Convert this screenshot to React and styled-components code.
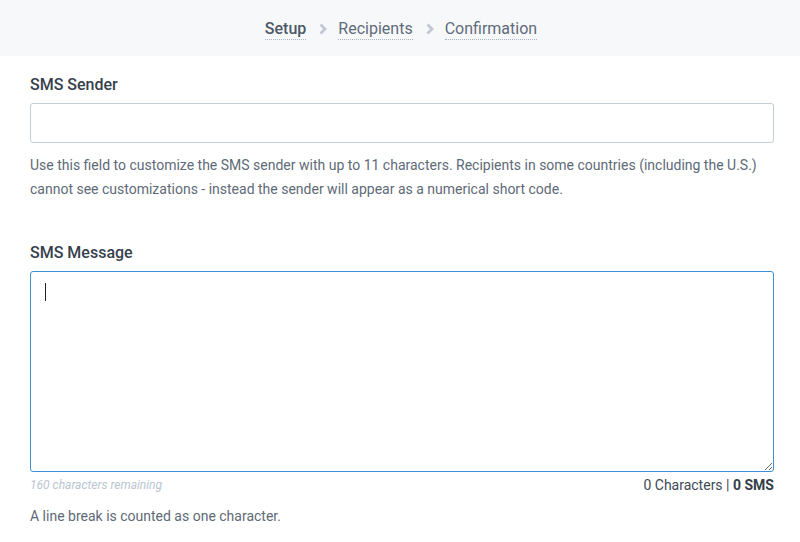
import styled, { createGlobalStyle } from "styled-components";
import { useState } from "react";

const GlobalStyle = createGlobalStyle`
  html, body {
    margin: 0;
    padding: 0;
    background: #ffffff;
    font-family: Roboto, "Liberation Sans", Arial, sans-serif;
  }
  * {
    box-sizing: border-box;
  }
`;

const Steps = styled.nav`
  height: 56px;
  background: #f7f8fa;
  display: flex;
  align-items: center;
  justify-content: center;
  padding-left: 2px;
`;
const Step = styled.span`
  font-size: 16px;
  color: ${(p) => (p.active ? "#4d5866" : "#5f6b7a")};
  font-weight: ${(p) => (p.active ? 500 : 400)};
  border-bottom: 1px dotted #aab4c0;
  line-height: 19px;
  padding-bottom: 1px;
  margin-top: 2px;
`;
const Chevron = styled.svg`
  width: 10px;
  height: 12px;
  margin: 2px 10px 0 12px;
`;

const Content = styled.main`
  padding: 17px 26px 0 30px;
`;
const Field = styled.section`
  display: flex;
  flex-direction: column;
  margin-bottom: ${(p) => p.gap || 0}px;
`;
const Label = styled.label`
  font-size: 16px;
  line-height: 24px;
  font-weight: 500;
  color: #36404c;
  margin-bottom: 6px;
`;
const Input = styled.input`
  height: 40px;
  border: 1px solid #c3cdd8;
  border-radius: 3px;
  padding: 0 12px;
  font: inherit;
  font-size: 16px;
  outline: none;
`;
const Help = styled.p`
  margin: ${(p) => p.top || 10}px 0 0;
  font-size: 14px;
  line-height: 24px;
  color: #5e6a77;
`;
const BoxWrap = styled.div`
  position: relative;
  display: flex;
  flex-direction: column;
`;
const MessageBox = styled.textarea`
  height: 201px;
  border: 1px solid #3f8fd2;
  border-radius: 3px;
  padding: 10px 15px;
  font-family: Roboto, "Liberation Sans", Arial, sans-serif;
  font-size: 16px;
  line-height: 24px;
  color: #333;
  caret-color: #333;
  outline: none;
  resize: vertical;
`;
const Caret = styled.span`
  position: absolute;
  left: 15px;
  top: 12px;
  width: 1px;
  height: 18px;
  background: #222;
  pointer-events: none;
`;
const Counter = styled.div`
  display: flex;
  justify-content: space-between;
  align-items: center;
  margin-top: 4px;
  height: 18px;
`;
const Remaining = styled.span`
  font-size: 12px;
  font-style: italic;
  color: #b9c5d1;
`;
const Count = styled.span`
  font-size: 14px;
  color: #404a56;
  b {
    font-weight: 700;
    color: #333d48;
  }
`;

const ChevronIcon = () => (
  <Chevron viewBox="0 0 10 12">
    <path d="M2.5 1.5 L7 6 L2.5 10.5" fill="none" stroke="#bfc8d3" strokeWidth="2.8" />
  </Chevron>
);

const App = () => {
  const [sender, setSender] = useState("");
  const [message, setMessage] = useState("");

  return (
    <>
      <GlobalStyle />
      <Steps>
        <Step active>Setup</Step>
        <ChevronIcon />
        <Step>Recipients</Step>
        <ChevronIcon />
        <Step>Confirmation</Step>
      </Steps>
      <Content>
        <Field gap={40}>
          <Label>SMS Sender</Label>
          <Input value={sender} onChange={(e) => setSender(e.target.value)} />
          <Help>
            Use this field to customize the SMS sender with up to 11 characters. Recipients in some countries
            (including the U.S.) cannot see customizations - instead the sender will appear as a numerical short
            code.
          </Help>
        </Field>
        <Field>
          <Label>SMS Message</Label>
          <BoxWrap>
            <MessageBox value={message} onChange={(e) => setMessage(e.target.value)} />
            {message.length === 0 && <Caret />}
          </BoxWrap>
          <Counter>
            <Remaining>{160 - message.length} characters remaining</Remaining>
            <Count>
              {message.length} Characters | <b>{message.length ? 1 : 0} SMS</b>
            </Count>
          </Counter>
          <Help top={10}>A line break is counted as one character.</Help>
        </Field>
      </Content>
    </>
  );
};

export default App;
